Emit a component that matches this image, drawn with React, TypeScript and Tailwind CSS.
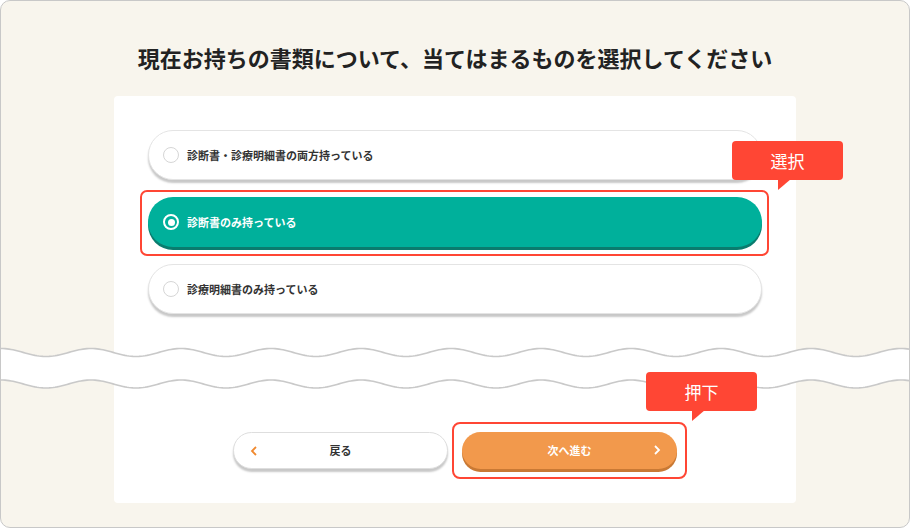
import React from "react";

const JP = { fontFamily: '"Noto Sans CJK JP", "Noto Sans", sans-serif' };

const options = [
  { label: "診断書・診療明細書の両方持っている", selected: false },
  { label: "診断書のみ持っている", selected: true },
  { label: "診療明細書のみ持っている", selected: false },
];

function wavePath(cy: number, width: number, reverse = false) {
  const pts: string[] = [];
  for (let i = 0; i <= width; i += 2) {
    const x = reverse ? width - i : i;
    const y = cy - 4 * Math.cos((2 * Math.PI * x) / 90);
    pts.push(`${i === 0 && !reverse ? "M" : "L"}${x} ${y.toFixed(2)}`);
  }
  return pts.join(" ");
}

// ギザギザの省略線（上下の波線と白帯）
function WaveBreak() {
  const w = 908;
  const top = wavePath(6.5, w);
  const bottom = wavePath(38, w);
  const fill = top + " " + wavePath(38, w, true) + " Z";
  return (
    <svg width={w} height={46} viewBox={`0 0 ${w} 46`} className="block shrink-0">
      <rect x={113} y={0} width={682} height={46} fill="#ffffff" />
      <path d={fill} fill="#ffffff" />
      <path d={top} fill="none" stroke="#c9c9c9" strokeWidth={1.6} />
      <path d={bottom} fill="none" stroke="#c9c9c9" strokeWidth={1.6} />
    </svg>
  );
}

function Callout({ label, className }: { label: string; className: string }) {
  return (
    <div className={`absolute h-[39px] w-[111px] ${className}`}>
      <div className="flex h-full w-full items-center justify-center rounded-[4px] bg-[#ff4634] text-[17px] text-white">
        {label}
      </div>
      <svg width={14} height={11} viewBox="0 0 14 11" className="absolute left-[46px] top-[38px]">
        <path d="M0 0 L13 0 L0 11 Z" fill="#ff4634" />
      </svg>
    </div>
  );
}

export default function App() {
  return (
    <div
      className="flex h-[528px] w-[910px] flex-col overflow-hidden rounded-[10px] border border-[#c8c8c8] bg-[#f8f5ed]"
      style={JP}
    >
      <h1 className="pt-[41px] text-center text-[22px] font-bold leading-[30px] text-[#222222]">
        現在お持ちの書類について、当てはまるものを選択してください
      </h1>

      <div className="mx-auto mt-[24px] w-[682px] rounded-t-[4px] bg-white px-[34px] pb-[32px] pt-[34px]">
        <ul className="flex flex-col gap-[17px]">
          {options.map((o) => (
            <li key={o.label} className="relative">
              {o.selected ? (
                <>
                  <div className="absolute -left-[8px] -right-[7px] -top-[7px] -bottom-[9px] rounded-[7px] border-[2.5px] border-[#ff4634]" />
                  <div className="relative flex h-[50px] items-center gap-[8px] rounded-full bg-[#00b09b] pl-[15px] shadow-[0_3px_0_#0a7c6e]">
                    <span className="flex h-[16px] w-[16px] items-center justify-center rounded-full border-2 border-white">
                      <span className="h-[7px] w-[7px] rounded-full bg-white" />
                    </span>
                    <span className="text-[11px] font-bold text-white">{o.label}</span>
                  </div>
                  <Callout label="選択" className="left-[584px] -top-[56px]" />
                </>
              ) : (
                <div className="flex h-[50px] items-center gap-[8px] rounded-full border border-[#e4e4e4] bg-white pl-[14px] shadow-[0_3px_2px_rgba(0,0,0,0.22)]">
                  <span className="h-[16px] w-[16px] rounded-full border border-[#d6d6d6] bg-white" />
                  <span className="text-[11px] font-bold text-[#333333]">{o.label}</span>
                </div>
              )}
            </li>
          ))}
        </ul>
      </div>

      <WaveBreak />

      <div className="mx-auto flex w-[682px] justify-center gap-[14px] rounded-b-[4px] bg-white pb-[34px] pt-[40px]">
        <button className="relative flex h-[37px] w-[215px] items-center justify-center rounded-full border border-[#dedede] bg-white shadow-[0_3px_2px_rgba(0,0,0,0.22)]">
          <svg width={8} height={10} viewBox="0 0 8 10" className="absolute left-[16px] top-[13px]">
            <path d="M6 1 L2 5 L6 9" fill="none" stroke="#f0892f" strokeWidth={1.8} />
          </svg>
          <span className="text-[11px] font-bold text-[#333333]">戻る</span>
        </button>
        <div className="relative">
          <div className="absolute -bottom-[10px] -left-[10px] -right-[10px] -top-[10px] rounded-[8px] border-[2.5px] border-[#ff4634]" />
          <button className="relative flex h-[37px] w-[215px] items-center justify-center rounded-full bg-[#f2994c] shadow-[0_3px_0_#c97934]">
            <span className="text-[11px] font-bold text-white">次へ進む</span>
            <svg width={8} height={10} viewBox="0 0 8 10" className="absolute right-[16px] top-[13px]">
              <path d="M2 1 L6 5 L2 9" fill="none" stroke="#ffffff" strokeWidth={1.8} />
            </svg>
          </button>
          <Callout label="押下" className="left-[184px] -top-[60px]" />
        </div>
      </div>
    </div>
  );
}
